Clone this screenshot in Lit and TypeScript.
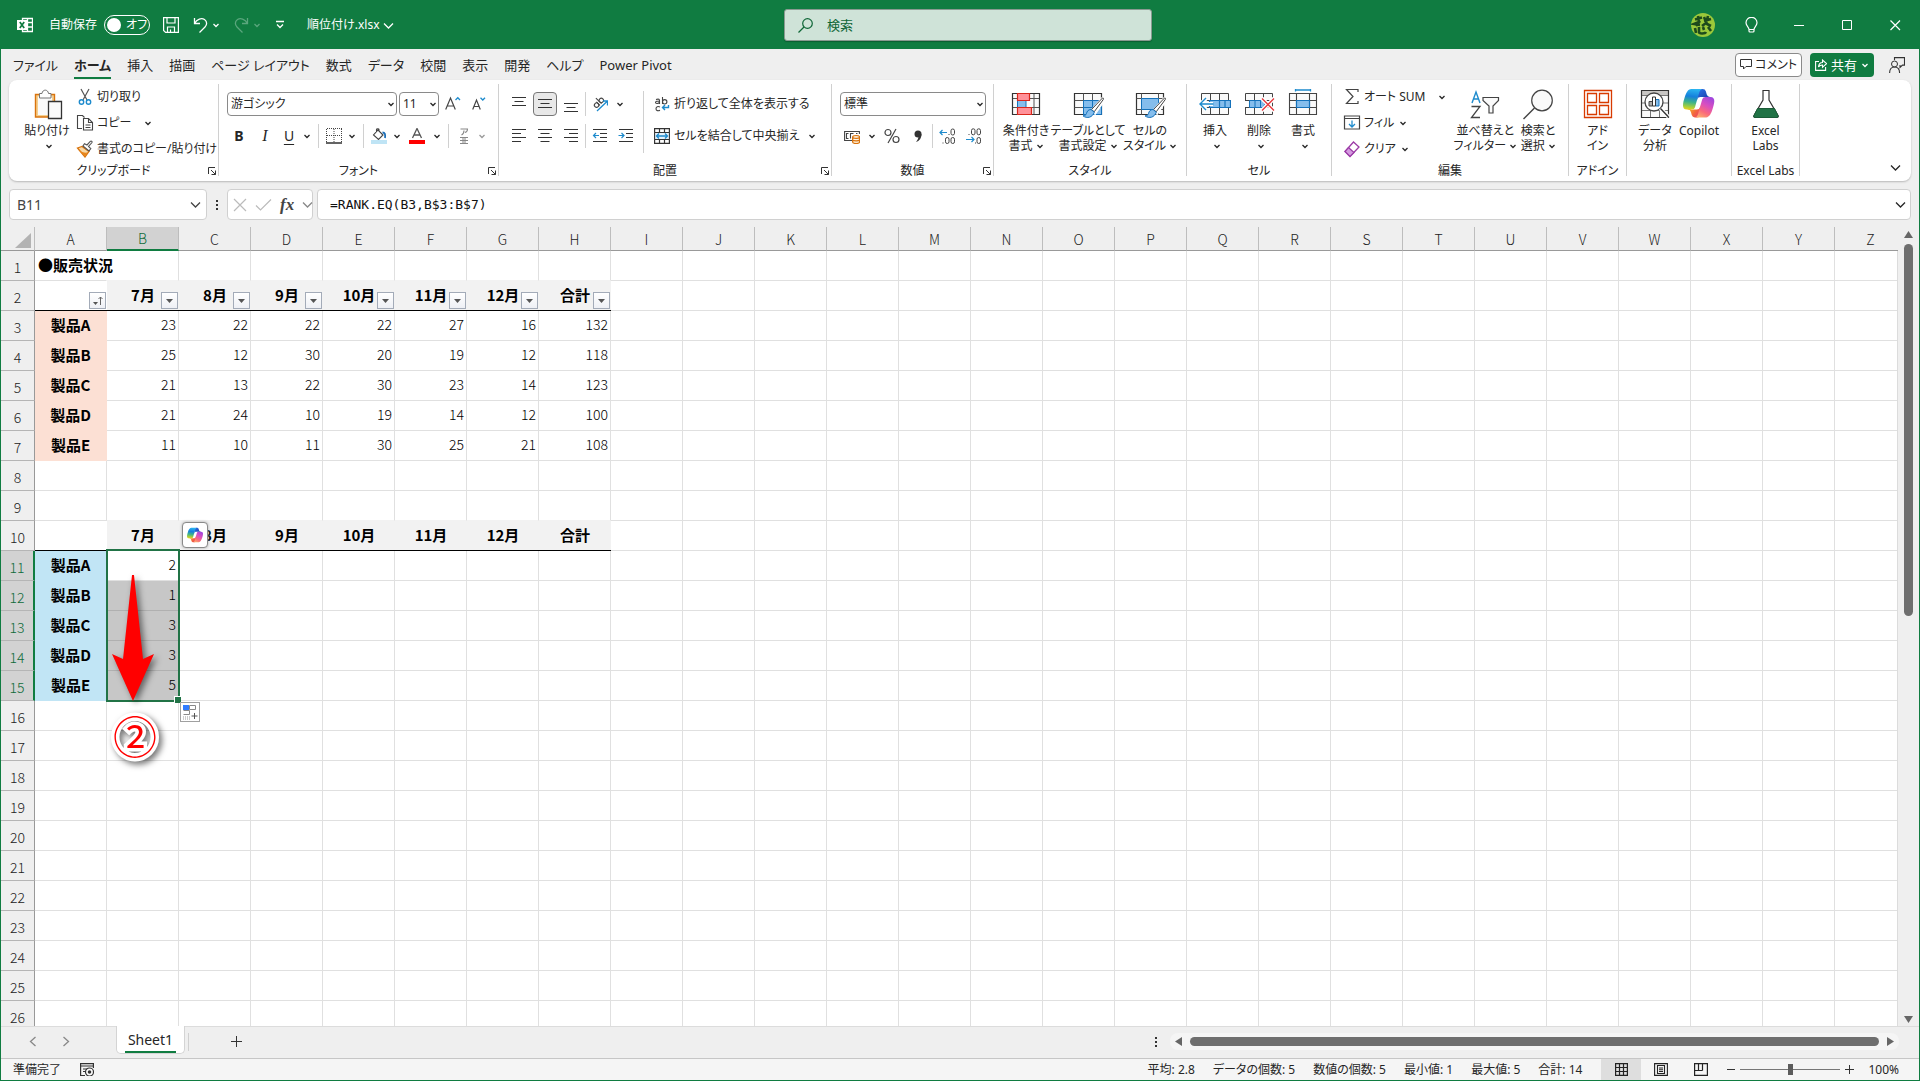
import { LitElement, html, svg, css, nothing } from "lit";
import { customElement } from "lit/decorators.js";
import { classMap } from "lit/directives/class-map.js";

type Frag = ReturnType<typeof svg>;

const copilotMark = (id: string) => svg`
  <defs>
    <linearGradient id="${id}a" x1="38" y1="17" x2="28" y2="4" gradientUnits="userSpaceOnUse"><stop offset="0" stop-color="#1a3fa8"/><stop offset="1" stop-color="#2a6be0"/></linearGradient>
    <linearGradient id="${id}b" x1="9" y1="33" x2="22" y2="43" gradientUnits="userSpaceOnUse"><stop offset="0" stop-color="#f7b228"/><stop offset=".6" stop-color="#f2683c"/><stop offset="1" stop-color="#ee4a5a"/></linearGradient>
    <linearGradient id="${id}c" x1="16" y1="4" x2="12" y2="34" gradientUnits="userSpaceOnUse"><stop offset="0" stop-color="#2bb5f0"/><stop offset=".35" stop-color="#1580dc"/><stop offset=".62" stop-color="#3db38a"/><stop offset=".85" stop-color="#a8cf3a"/><stop offset="1" stop-color="#f5d21c"/></linearGradient>
    <linearGradient id="${id}d" x1="40" y1="14" x2="24" y2="44" gradientUnits="userSpaceOnUse"><stop offset="0" stop-color="#9b45e0"/><stop offset=".4" stop-color="#d94fc0"/><stop offset=".7" stop-color="#fa6a7c"/><stop offset="1" stop-color="#fdb06a"/></linearGradient>
  </defs>
  <path fill="url(#${id}a)" d="M34.1 7.3A4.6 4.6 0 0 0 29.700 4h-1.300a4.600 4.600 0 0 0-4.600 3.800L21.500 20.400l.6-2a4.600 4.600 0 0 1 4.400-3.300h7.800l3.300 1.300 3.200-1.300h-.9a4.600 4.600 0 0 1-4.500-3.300z"/>
  <path fill="url(#${id}b)" d="M14.300 40.700A4.600 4.600 0 0 0 18.800 44h2.900a4.600 4.600 0 0 0 4.600-4.500l.3-12.200-.7 2.200a4.600 4.600 0 0 1-4.400 3.400h-7.900l-2.800-1.600-3.100 1.600h.9a4.600 4.600 0 0 1 4.500 3.300z"/>
  <path fill="url(#${id}c)" d="M29.500 4h-16c-4.600 0-7.400 6.100-9.200 12.100-2.200 7.200-5 16.800 3.200 16.800h6.900a4.600 4.600 0 0 0 4.500-3.400c1.400-5 4-13.800 5.900-20.500C26 6 27 4 29.500 4z"/>
  <path fill="url(#${id}d)" d="M18.500 44h16c4.600 0 7.400-6.100 9.200-12.100 2.200-7.200 5-16.800-3.200-16.800h-6.900a4.600 4.600 0 0 0-4.500 3.400c-1.400 5-4 13.800-5.900 20.500C22 42 21 44 18.500 44z"/>`;

const brush = svg`
  <path d="M30.500 9.500 20 21.500l3 2.500 8.500-12.500c.7-1.500-.2-2.600-1-2z" fill="#fff" stroke="#fff" stroke-width="3"/>
  <path d="M30.500 9 19.500 20.500l2.700 2.300L31.300 10.500c.6-1.200-.1-2-.8-1.500z" fill="#fff" stroke="#444"/>
  <path d="M19 20.500c-3 0-4 2-4.500 4-.4 1.600-1.800 2.300-3.500 2.300 4 3.200 9.500 1.700 11.300-3.600z" fill="#85bdec" stroke="#1572bb"/>`;

const icons: Record<string, Frag> = {
  chev: svg`<path d="M1.500 3 4 5.500 6.500 3" fill="none" stroke="currentColor" stroke-width="1.300"/>`,
  chevBig: svg`<path d="M1 3.500 5.500 8 10 3.500" fill="none" stroke="currentColor" stroke-width="1.300"/>`,
  excel: svg`<path d="M5.500 1.500h10v13h-10zM5.500 5.500h10M5.500 10h10M10.500 1.500v13" fill="none" stroke="#fff" stroke-width="1.300"/><rect y="3" width="10" height="10" fill="#fff"/><path d="m2.800 5 4.400 6M7.200 5l-4.400 6" stroke="#107c41" stroke-width="1.700"/>`,
  save: svg`<path d="M.6.600h14.800v14.800H2.600l-2-2zM4 .6v5.400h8V.6M4.500 15v-5h7v5M7.500 15v-2.500" fill="none" stroke="#fff" stroke-width="1.200"/>`,
  undo: svg`<path d="M1.500 1v5.500H7M1.500 6.500C4 2 8.500.5 11.500 2.500c3 2 2.500 5.500.5 7.500l-5.500 5.500" fill="none" stroke="currentColor" stroke-width="1.300"/>`,
  redo: svg`<path d="M13.500 1v5.500H8M13.500 6.500C11 2 6.500.5 3.500 2.500c-3 2-2.500 5.500-.5 7.500l5.500 5.500" fill="none" stroke="currentColor" stroke-width="1.300"/>`,
  customize: svg`<path d="M1 1.500h8M2 4.500 5 7.500l3-3" fill="none" stroke="#fff" stroke-width="1.300"/>`,
  search: svg`<circle cx="9.500" cy="5.500" r="4.800" fill="none" stroke="currentColor" stroke-width="1.200"/><path d="M6 9 .5 14.500" stroke="currentColor" stroke-width="1.200"/>`,
  avatar: svg`<circle cx="12" cy="12" r="12" fill="#9bc83a"/><path d="M4 6.500l7-2M7 3l1 6-5 2 6 1M9 8l-4 5M13 4l3 7 4 2M13 8l7-2M17 3l-2 7-4 3M4 15l1 5M8 14v5c0 2 6 2 7 0M12 14l1 3M17 14l3 4" fill="none" stroke="#1d4a1c" stroke-width="2.600"/>`,
  bulb: svg`<path d="M4 12.500h5M4 12.500C4 10 1 9 1 5.800a5.500 5.500 0 0 1 11 0C12 9 9 10 9 12.500v1.500a1 1 0 0 1-1 1H5a1 1 0 0 1-1-1z" fill="none" stroke="#fff" stroke-width="1.200"/>`,
  min: svg`<path d="M0 5.500h10" stroke="#fff"/>`,
  max: svg`<path d="M.5.500h9v9h-9z" fill="none" stroke="#fff"/>`,
  close: svg`<path d="m.5.500 9.500 9.500M10 .5.500 10" stroke="#fff" stroke-width="1.200"/>`,
  comment: svg`<path d="M.5.500h11v7H6L3.500 10V7.500h-3z" fill="none" stroke="#333" stroke-linejoin="round"/>`,
  share: svg`<path d="M4 2.500H.6v8.900h10V8M3.500 8c.3-3 2-4.500 4-4.500V1l4 3.600-4 3.700V6C6 6 4.500 6.500 3.500 8z" fill="none" stroke="#fff" stroke-width="1.100"/>`,
  person: svg`<circle cx="5.500" cy="7" r="3" fill="none" stroke="#333"/><path d="M.6 16c0-4 2-6 5-6s5 2 5 6M5.500 3V.6h10v7.500h-2L11 10.500V8" fill="none" stroke="#333" stroke-width="1.100"/>`,
  paste: svg`<path d="M4.500 5.500h19V28h-19z" fill="#f5cf8e" stroke="#d9730d" stroke-width="1.400"/><path d="M7 7.500h14V26H7z" fill="#fafafa"/><path d="M8.500 4.500H11C11.500 0 17 0 17.500 4.500H20v4.500H8.500z" fill="#fff" stroke="#777"/><path d="M17.500 12.500h13v17h-13z" fill="#fafafa" stroke="#333" stroke-width="1.300"/>`,
  cut: svg`<path d="M5 1l6 11M13 1 7 12" stroke="#555" stroke-width="1.200"/><circle cx="5.500" cy="14" r="2.200" fill="none" stroke="#1e8bcd" stroke-width="1.400"/><circle cx="12.500" cy="14" r="2.200" fill="none" stroke="#1e8bcd" stroke-width="1.400"/>`,
  copy: svg`<path d="M6 14.500H1.500v-13h5l2 2" fill="none" stroke="#444" stroke-width="1.100"/><path d="M7.500 4.500h5l4 4v7.500h-9zM12.500 4.500v4h4M9.500 11h5M9.500 13.500h5" fill="#fff" stroke="#444" stroke-width="1.100"/>`,
  painter: svg`<path d="M1.500 8 6 6.500l7 5-4 5.500z" fill="#f7d9a8" stroke="#d9730d" stroke-width="1.300"/><path d="M2.500 10c3 2 6 3 9 2.500L9 16.500z" fill="#e8861b"/><path d="m7 6 6 5 1.800-2.500L12.500 6.500 16 2.500c.5-1-1-1.800-1.700-1L11 5 8.500 3.800z" fill="#fff" stroke="#555" stroke-width="1.100"/>`,
  launcher: svg`<path d="M.5 7V.5H7M3 3l4.500 4.500M7.500 3.500v4h-4" fill="none" stroke="#333"/>`,
  growA: svg`<path d="M.7 13.500 5.500 2l4.800 11.500M2.200 10h6.600" fill="none" stroke="#444" stroke-width="1.200"/><path d="m10.500 4 2.300-2.300L15 4" fill="none" stroke="#1e8bcd" stroke-width="1.300"/>`,
  shrinkA: svg`<path d="M.7 13.500 4.500 4l3.800 9.500M2 10.500h5" fill="none" stroke="#444" stroke-width="1.200"/><path d="m8.500 1.700 2.300 2.300L13 1.700" fill="none" stroke="#1e8bcd" stroke-width="1.300"/>`,
  borders: svg`<path d="M.5 1v13M15.500 1v13M8 1v13M1 .5h15M1 7.500h15" fill="none" stroke="#444" stroke-dasharray="1 1"/><path d="M0 15h16" stroke="#222" stroke-width="1.400"/>`,
  fill: svg`<path d="m7 2 5 5-4.500 4.500-5-4.500zM5.500 4V1.500c0-1 2.500-1 2.500 0V3" fill="none" stroke="#444" stroke-width="1.100"/><path d="M11.500 4.500c2.500 0 3 2 2.500 5.500" fill="none" stroke="#1e6fb8" stroke-width="1.800"/><path d="M0 12h16v4H0z" fill="#bfe4f5"/>`,
  fontColor: svg`<path d="m3.500 10 4.500-9.500L12.500 10M5 7h6" fill="none" stroke="#555" stroke-width="1.300"/><path d="M0 12h16v4H0z" fill="#f00"/>`,
  phonetic: svg`<path d="M1.500 1h7C8.500 3 7.500 4 6 4.500M5 2.500C5 5 4.500 6 2.500 7" fill="none" stroke="#888" stroke-width="1.100"/><path d="M1 9.500h8M1 12.500h8M1 15.500h8M3 11h4M3 14h4" stroke="#888"/>`,
  vTop: svg`<path d="M1 1.500h14M3.500 5.500h9M1 9.500h14" stroke="#333"/>`,
  vMid: svg`<path d="M1 3.500h14M3.500 7.500h9M1 11.500h14" stroke="#333"/>`,
  vBot: svg`<path d="M1 7.500h14M3.500 11.500h9M1 15.500h14" stroke="#333"/>`,
  hLeft: svg`<path d="M1 1.500h14M1 5.500h9M1 9.500h14M1 13.500h9" stroke="#333"/>`,
  hMid: svg`<path d="M1 1.500h14M3.500 5.500h9M1 9.500h14M3.500 13.500h9" stroke="#333"/>`,
  hRight: svg`<path d="M1 1.500h14M6 5.500h9M1 9.500h14M6 13.500h9" stroke="#333"/>`,
  orient: svg`<g transform="rotate(-45 6 7)" fill="none" stroke="#444" stroke-width="1.100"><circle cx="3.500" cy="7.500" r="2.200"/><path d="M5.700 5v5M8 2v8"/><circle cx="10.200" cy="7.500" r="2.200"/></g><path d="m5 15 10-9.500M11 5h4.500v4.500" fill="none" stroke="#1e8bcd" stroke-width="1.300"/>`,
  outdent: svg`<path d="M1 1.500h14M8 5.500h7M8 9.500h7M1 13.500h14" stroke="#333"/><path d="M1.500 7.500H7M4 5 1.500 7.500 4 10" fill="none" stroke="#1e8bcd" stroke-width="1.200"/>`,
  indent: svg`<path d="M1 1.500h14M8 5.500h7M8 9.500h7M1 13.500h14" stroke="#333"/><path d="M.5 7.500H6M3.500 5 6 7.500 3.500 10" fill="none" stroke="#1e8bcd" stroke-width="1.200"/>`,
  wrap: svg`<g fill="none" stroke="#444" stroke-width="1.100"><path d="M2 3.500c3-1 3.500 0 3.500 1.500v3M5.500 5C3 5 1.500 5.500 1.500 6.500S4 8 5.500 6.500M8.500 1v7"/><circle cx="10.700" cy="5.800" r="2.200"/><path d="M6 11c-2-1-4-.3-4 1.700s2 2.600 4 1.600"/></g><path d="M14.500 9v2.500h-6M11 9l-2.500 2.500L11 14" fill="none" stroke="#1e8bcd" stroke-width="1.400"/>`,
  merge: svg`<path d="M.6.600h14.800v14.800H.6zM5.500.6v3.900M10.500.6v3.900M5.500 11.500v3.900M10.500 11.500v3.900" fill="none" stroke="#333" stroke-width="1.200"/><path d="M.6 4.500h14.800v7H.6z" fill="#e4f1fb" stroke="#333"/><path d="M2.500 8h11M5 5.500 2.500 8 5 10.500M11 5.500 13.500 8 11 10.500" fill="none" stroke="#1e8bcd" stroke-width="1.300"/>`,
  currency: svg`<path d="M8 12.500H.6v-9h14.800V6M4.500 5.500h-2v5h2M9.500 5.500h-3v5M12 5.500h1.500" fill="none" stroke="#444" stroke-width="1.100"/><path d="M8.600 9c0-2 7-2 7 0v5c0 2-7 2-7 0zM8.600 9c0 1.800 7 1.800 7 0M8.600 11.500c0 1.800 7 1.800 7 0" fill="#fdebd0" stroke="#d9730d" stroke-width="1.200"/>`,
  percent: svg`<circle cx="4" cy="4.500" r="3" fill="none" stroke="#444" stroke-width="1.200"/><circle cx="12" cy="11.500" r="3" fill="none" stroke="#444" stroke-width="1.200"/><path d="M12 1 4 15" stroke="#444" stroke-width="1.200"/>`,
  comma: svg`<circle cx="5" cy="4" r="3.500" fill="#333"/><path d="M8.500 4c0 4-2 7-5.500 8C5 9.500 5.500 8 5.500 6z" fill="#333"/>`,
  decInc: svg`<path d="M1 4.500h7M3.500 2 1 4.500 3.500 7" fill="none" stroke="#1e8bcd" stroke-width="1.200"/><g fill="none" stroke="#444"><rect x="12" y="1" width="3.500" height="6" rx="1.700"/><rect x="6.500" y="9.500" width="3.500" height="6" rx="1.700"/><rect x="12" y="9.500" width="3.500" height="6" rx="1.700"/></g><path d="M9.500 6h1v1h-1zM3.500 14.500h1v1h-1z" fill="#444"/>`,
  decDec: svg`<path d="M1 11.500h8M6.500 9 9 11.500 6.500 14" fill="none" stroke="#1e8bcd" stroke-width="1.200"/><g fill="none" stroke="#444"><rect x="6.500" y=".8" width="3.500" height="6" rx="1.700"/><rect x="12" y=".8" width="3.500" height="6" rx="1.700"/><rect x="12" y="9.500" width="3.500" height="6" rx="1.700"/></g><path d="M3.500 6h1v1h-1zM10 14.500h1v1h-1z" fill="#444"/>`,
  condFmt: svg`<path d="M2.500 4.500h27v21h-27z" fill="#fafafa"/><path d="M24 4.500v21M2.500 9.500h27M2.500 18.500h27M7.500 4.500v21" stroke="#555" fill="none"/><path d="M2.500 4.500h27v21h-27z" fill="none" stroke="#333" stroke-width="1.200"/><path d="M7.500 11.500h8.500v7H7.500z" fill="#85bdec" stroke="#1572bb"/><path d="M7.500 4.500h12v7h-12zM7.500 18.500h14v7h-14z" fill="#ff9199" stroke="#d9261c" stroke-width="1.200"/>`,
  tblFmt: svg`<path d="M2.500 4.500h27v21h-27z" fill="#fafafa" stroke="#333" stroke-width="1.200"/><path d="M11.500 11.500h18v14h-18z" fill="#85bdec"/><path d="M2.500 11.500h27M2.500 18.500h27M11.500 4.500v21M20.500 4.500v21" stroke="#555" fill="none"/><path d="M11.500 11.500h18v14h-18M20.500 11.500v14M11.500 18.500h18M11.500 11.500v14" fill="none" stroke="#1572bb"/>${brush}`,
  cellStyle: svg`<path d="M2.500 4.500h27v21h-27z" fill="#fafafa" stroke="#333" stroke-width="1.200"/><path d="M2.500 9.500h27M2.500 20.500h27M7.500 4.500v21M24.500 4.500v21" stroke="#555"/><path d="M7.500 9.500h17v11h-17z" fill="#85bdec" stroke="#1572bb"/>${brush}`,
  insCell: svg`<path d="M2.500 4.500h27v21h-27zM2.500 18.500h27M11.500 4.500v7M20.500 4.500v7M11.500 18.500v7M20.500 18.500v7M2.500 11.500h27" fill="#fafafa" stroke="#444"/><path d="M10.500 11.500h21v7h-21zM20.500 11.500v7M26 11.500v7" fill="#85bdec" stroke="#1572bb" stroke-width="1.200"/><path d="M2 15h12M7 9.500 1.500 15 7 20.500" fill="none" stroke="#fff" stroke-width="4"/><path d="M1.500 15h13M7 9 1 15l6 6" fill="none" stroke="#1e8bcd" stroke-width="1.400"/>`,
  delCell: svg`<path d="M2.500 4.500h27v21h-27zM2.500 18.500h27M11.500 4.500v21M20.500 4.500v21M2.500 11.500h27" fill="#fafafa" stroke="#444"/><path d="M1 12h4v6H1z" fill="#fff"/><path d="M6.500 11.500H20l2 3.500-2 3.500H6.500zM12 11.500v7M17.500 11.500v7" fill="#85bdec" stroke="#1572bb"/><path d="m19 9.500 12 12M31 9.500l-12 12" stroke="#fff" stroke-width="4"/><path d="m19 9.500 12 12M31 9.500l-12 12" stroke="#e8383d" stroke-width="1.300"/>`,
  fmtCell: svg`<path d="M2.500 4.500h27v21h-27zM2.500 11.500h27M2.500 18.500h27M9.500 4.500v21M22.500 4.500v21" fill="#fafafa" stroke="#444" stroke-width="1.100"/><path d="M9.500 11.500h13v7h-13z" fill="#85bdec" stroke="#1572bb" stroke-width="1.200"/><path d="M8.500 1h15M8.500 0v2.500M23.500 0v2.500" stroke="#1e8bcd" stroke-width="1.300"/>`,
  sigma: svg`<path d="M15 4V1.500H3.500L10 8.500l-6.500 7H15V13" fill="none" stroke="#444" stroke-width="1.200"/>`,
  fillDown: svg`<path d="M1.500 2h15v13h-15zM1.500 4.500h15" fill="none" stroke="#444" stroke-width="1.200"/><path d="M9 6.500V13M6 10l3 3 3-3" fill="none" stroke="#1e8bcd" stroke-width="1.300"/>`,
  eraser: svg`<path d="M10.500 2 16 7 7 16.500 2 11.500z" fill="#fff" stroke="#9b3aa6" stroke-width="1.300"/><path d="m5.500 7.500 5.500 5L7 16.500l-5-5z" fill="#d59be0" stroke="#9b3aa6" stroke-width="1.200"/>`,
  sort: svg`<path d="M3 14 7 3l4 11M4.500 10h5" fill="none" stroke="#1e8bcd" stroke-width="1.400"/><path d="M2.500 17.500H11l-8.500 11H11" fill="none" stroke="#444" stroke-width="1.300"/><path d="M14 8.500h15.500v3L24 17v7h-4v-7l-6-5.500z" fill="#fafafa" stroke="#444" stroke-width="1.200"/>`,
  find: svg`<circle cx="20" cy="11.500" r="10.300" fill="#fafafa" stroke="#444" stroke-width="1.200"/><path d="M12.500 19 1.500 30" stroke="#444" stroke-width="1.400"/>`,
  addins: svg`<path d="M2.500 1.500h27v27h-27zM5.500 4.500h9v9h-9zM17.500 4.500h9v9h-9zM5.500 16.500h9v9h-9zM17.500 16.500h9v9h-9z" fill="none" stroke="#d83b01" stroke-width="1.300"/>`,
  analyze: svg`<path d="M2.500 1.500h27v27h-27z" fill="#fafafa"/><path d="M3 2h26v4H3z" fill="#c8c6c4"/><path d="M2.500 6.500h27M2.500 14h27M2.500 21.500h27M11.500 21v7.500M20.500 21v7.500" stroke="#777"/><path d="M2.500 1.500h27v27h-27z" fill="none" stroke="#333" stroke-width="1.200"/><circle cx="15" cy="13" r="9" fill="#fff" stroke="#444" stroke-width="1.300"/><path d="m21.500 19.500 8 8.500" stroke="#fff" stroke-width="4"/><path d="m21.500 19.500 8 8.500" stroke="#333" stroke-width="1.400"/><path d="M10 12.500h3.500V17H10z" fill="#aaa" stroke="#444"/><path d="M16.500 10.500H20V17h-3.500z" fill="#85bdec" stroke="#1572bb"/><path d="M13.500 8h3v9h-3z" fill="#fff" stroke="#333"/>`,
  labs: svg`<path d="M13 1.500h6v9.500l9 15.500c.6 1.400 0 2-1.200 2H5.200c-1.200 0-1.800-.6-1.200-2L13 11z" fill="#fff" stroke="#333" stroke-width="1.200"/><path d="M7.500 19.500h17l3.500 7c.6 1.400 0 2-1.200 2H5.200c-1.200 0-1.800-.6-1.200-2z" fill="#217346" stroke="#1b5c38"/>`,
  copilot: copilotMark("cp"),
  copilotSmall: copilotMark("cs"),
  cancel: svg`<path d="m1 1 12 12M13 1 1 13" stroke="#bbb" stroke-width="1.200"/>`,
  enter: svg`<path d="m1 7.500 4.500 4.500L16 1.500" fill="none" stroke="#bbb" stroke-width="1.200"/>`,
  dots: svg`<path d="M0 0h2v2H0zM0 4h2v2H0zM0 8h2v2H0z" fill="#333"/>`,
  left: svg`<path d="M6.500 1 1.500 5.500l5 4.500" fill="none" stroke="#888" stroke-width="1.300"/>`,
  right: svg`<path d="m1.500 1 5 4.500-5 4.500" fill="none" stroke="#888" stroke-width="1.300"/>`,
  plus: svg`<path d="M5.500 0v11M0 5.500h11" stroke="#333"/>`,
  minus: svg`<path d="M0 .5h8" stroke="#333"/>`,
  plusSmall: svg`<path d="M4.500 0v9M0 4.500h9" stroke="#333"/>`,
  triUp: svg`<path d="M4.500 0 9 7H0z" fill="#666"/>`,
  triDown: svg`<path d="M4.500 7 0 0h9z" fill="#666"/>`,
  triLeft: svg`<path d="M0 4.500 7 0v9z" fill="#666"/>`,
  triRight: svg`<path d="M7 4.500 0 0v9z" fill="#666"/>`,
  macro: svg`<path d="M5 12.500H.6V.6h12.800V5M.6 3h12.800M3 6h4M3 8.500h2" fill="none" stroke="#333" stroke-width="1.200"/><circle cx="9.500" cy="9" r="4" fill="#fff" stroke="#333" stroke-width="1.200"/><circle cx="9.500" cy="9" r="1.800" fill="#333"/>`,
  viewGrid: svg`<path d="M.6.600h11.800v11.800H.6zM4.500.6v11.800M8.500.6v11.800M.6 4.500h11.800M.6 8.500h11.800" fill="none" stroke="#222" stroke-width="1.200"/>`,
  viewPage: svg`<path d="M.6.600h12.800v11.800H.6zM3.500 2.500h7v8h-7zM5 5h4M5 6.800h4M5 8.500h4" fill="none" stroke="#222" stroke-width="1.100"/>`,
  viewBreak: svg`<path d="M.6.600h12.800v11.800H.6zM4.500.6v6.900M8.500.6v6.900M.6 7.500h7.900" fill="none" stroke="#222" stroke-width="1.200"/>`,
  corner: svg`<path d="M16 0v15H0z" fill="#b3b3b3"/>`,
  filter: svg`<path d="M1 1h7L4.500 5z" fill="#555"/>`,
  sorted: svg`<path d="M0 6h5L2.500 9z" fill="#555"/><path d="M7.500 9V1M5.500 3l2-2 2 2" fill="none" stroke="#666"/>`,
  autofill: svg`<path d="M1 1h6v5H1z" fill="#2f7bff"/><path d="M7.500 1.500h6v4h-6zM1.500 6.500h6v4h-6" fill="none" stroke="#888"/><path d="M1 13h7M1 15h7" stroke="#999" stroke-dasharray="1 1"/><path d="M12.500 9v6M9.500 12h6" stroke="#555"/>`,
};

const ic = (name: string, w: number, h = w, box = `0 0 ${w} ${h}`) =>
  html`<svg class="ic" width=${w} height=${h} viewBox=${box} fill="none" aria-hidden="true">${icons[name]}</svg>`;
const chev = () => html`<span class="chev">${ic("chev", 8)}</span>`;
const tool = (name: string, label: string, size = 16, h = size, cls = "") =>
  html`<button class="tool ${cls}" aria-label=${label}>${ic(name, size, h)}</button>`;
const drop = (label: string, disabled = false) =>
  html`<button class="drop" aria-label=${label} ?disabled=${disabled}>${ic("chev", 8)}</button>`;
const sep = () => html`<span class="minisep"></span>`;
const rowBtn = (name: string, label: string, arrow = false) =>
  html`<button class="rowbtn">${ic(name, 18)}<span>${label}</span>${arrow ? chev() : nothing}</button>`;
const big = (name: string, l1: string, l2: string | null, arrow: boolean, cls: string, box = "0 0 32 32") =>
  html`<button class="big ${cls}">
    ${ic(name, 32, 32, box)}
    <span class="line">${l1}</span>
    ${l2 !== null || arrow ? html`<span class="line">${l2}${arrow ? chev() : nothing}</span>` : nothing}
  </button>`;
const groupLabel = (label: string, launcher = false) => html`<div class="glabel"><span>${label}</span>${
  launcher ? html`<button class="launch" aria-label=${`${label}の設定`}>${ic("launcher", 8)}</button>` : nothing
}</div>`;

const TABS = ["ファイル", "ホーム", "挿入", "描画", "ページ レイアウト", "数式", "データ", "校閲", "表示", "開発", "ヘルプ", "Power Pivot"];
const COLS = "ABCDEFGHIJKLMNOPQRSTUVWXYZ".split("");
const MONTHS = ["7月", "8月", "9月", "10月", "11月", "12月", "合計"];
const SALES: [string, number[]][] = [
  ["製品A", [23, 22, 22, 22, 27, 16, 132]],
  ["製品B", [25, 12, 30, 20, 19, 12, 118]],
  ["製品C", [21, 13, 22, 30, 23, 14, 123]],
  ["製品D", [21, 24, 10, 19, 14, 12, 100]],
  ["製品E", [11, 10, 11, 30, 25, 21, 108]],
];
const RANKS = [2, 1, 3, 3, 5];
const STATS = ["平均: 2.8", "データの個数: 5", "数値の個数: 5", "最小値: 1", "最大値: 5", "合計: 14"];

@customElement("app-root")
export class AppRoot extends LitElement {
  static styles = css`
    :host {
      --green: #107c41;
      display: flex;
      flex-direction: column;
      box-sizing: border-box;
      height: 100vh;
      border: 1px solid var(--green);
      background: #efefef;
      color: #262626;
      font: 12px/16px "Noto Sans", "Noto Sans CJK JP", sans-serif;
      font-feature-settings: "palt";
      overflow: hidden;
    }
    * { box-sizing: border-box; }
    button, input, select {
      font: inherit;
      font-feature-settings: inherit;
      color: inherit;
      margin: 0;
      padding: 0;
      border: 0;
      background: none;
      outline: none;
    }
    .ic { display: block; flex: none; }

    .title {
      flex: 0 0 48px;
      display: grid;
      grid-template-columns: 1fr 368px 1fr;
      align-items: center;
      padding-left: 16px;
      background: var(--green);
      color: #fff;
    }
    .quick, .window, .autosave, .switch, .file { display: flex; align-items: center; }
    .autosave { margin: 0 13px 0 16px; gap: 7px; }
    .switch { position: relative; width: 46px; height: 20px; }
    .switch input {
      position: absolute;
      inset: 0;
      width: 46px;
      height: 20px;
      appearance: none;
      border: 1px solid #fff;
      border-radius: 10px;
    }
    .switch input::before {
      content: "";
      display: block;
      width: 14px;
      height: 14px;
      margin: 2px;
      border-radius: 50%;
      background: #fff;
    }
    .switch span { padding-left: 22px; }
    .quick button { display: flex; align-items: center; justify-content: center; height: 24px; }
    .quick .save { margin-right: 14px; }
    .quick .arrow { width: 8px; margin: 0 14px 0 4px; }
    .quick .faded { color: #5aa67d; }
    .quick .more { width: 10px; margin-right: 22px; }
    .quick .file { gap: 4px; }
    .find {
      display: flex;
      align-items: center;
      gap: 14px;
      height: 32px;
      padding: 0 13px;
      border: 1px solid #8a9a91;
      border-radius: 3px;
      background: #cfe3d8;
      color: #0e6636;
      box-shadow: 0 1px 1px #0b5f31;
    }
    .find input { flex: 1; font-size: 13px; }
    .find input::placeholder { color: #0e6636; opacity: 1; }
    .window { justify-content: flex-end; }
    .window button { display: grid; place-items: center; width: 48px; height: 48px; }

    .tabs { flex: 0 0 31px; display: flex; align-items: center; padding: 0 14px 0 4px; font-size: 13px; }
    .tabs nav { display: flex; flex: 1; }
    .tabs a {
      margin: 0 8px;
      padding: 6px 0 3px;
      line-height: 18px;
      color: inherit;
      text-decoration: none;
      border-bottom: 2px solid transparent;
      white-space: nowrap;
    }
    .tabs a.on { font-weight: bold; border-color: var(--green); }
    .pill {
      display: flex;
      align-items: center;
      justify-content: center;
      gap: 4px;
      height: 24px;
      padding: 0 4px;
      margin-right: 8px;
      border-radius: 4px;
      font-size: 13px;
    }
    .pill.note { min-width: 65px; gap: 3px; background: #fff; border: 1px solid #8a8a8a; font-size: 12px; }
    .pill.share { min-width: 64px; margin-right: 15px; background: var(--green); color: #fff; }

    .ribbon {
      flex: 0 0 101px;
      display: flex;
      margin: 0 8px;
      border-radius: 8px;
      background: #fff;
      box-shadow: 0 1px 2px #b8b8b8;
    }
    .group { flex: none; display: flex; flex-direction: column; }
    .group + .group { border-left: 1px solid transparent; border-image: linear-gradient(#fff 5px, #d0d0d0 5px, #d0d0d0 95px, #fff 95px) 1; }
    .body { flex: 1; display: flex; align-items: flex-start; padding: 0 8px; }
    .glabel { position: relative; height: 18px; padding-bottom: 2px; text-align: center; }
    .launch { position: absolute; right: 2px; top: 4px; }
    .w-clip { width: 209px; } .w-font { width: 280px; } .w-align { width: 333px; } .w-num { width: 162px; }
    .w-style { width: 193px; } .w-cell { width: 145px; } .w-edit { width: 237px; } .w-add { width: 58px; }
    .w-ai { width: 105px; } .w-labs { width: 68px; } .w-end { width: 1px; }
    .w-clip .body { padding: 0 0 0 12px; }
    .body.tight { padding: 0 0 0 6px; }
    .body.center { justify-content: center; padding: 0; }
    .fold { margin: auto 10px 8px auto; }

    .stack { display: flex; flex-direction: column; padding: 4px 0 0 3px; }
    .w-edit .stack { width: 115px; }
    .rowbtn { display: flex; align-items: center; gap: 3px; height: 26px; white-space: nowrap; }
    .rowbtn .chev { margin-left: 2px; }
    .far .chev { margin-left: 10px; }
    .chev { display: inline-flex; margin-left: 3px; vertical-align: middle; }
    .big {
      display: flex;
      flex-direction: column;
      align-items: center;
      padding-top: 9px;
      line-height: 15px;
      white-space: nowrap;
    }
    .big .ic + .line { margin-top: 2px; }
    .big .line { display: flex; align-items: center; justify-content: center; height: 15px; }
    .b44 { width: 44px; } .b52 { width: 52px; } .b62 { width: 62px; } .b70 { width: 72px; }

    .rows { display: flex; flex-direction: column; gap: 8px; padding-top: 12px; }
    .bar { display: flex; align-items: center; gap: 2px; height: 24px; }
    .bar.wide .minisep { margin: 0 3px; }
    .tool { display: grid; place-items: center; width: 24px; height: 24px; border-radius: 4px; }
    .tool.slim { width: 20px; }
    .tool.on { background: #e8e8e8; border: 1px solid #777; }
    .glyph { font-size: 14px; line-height: 24px; }
    .glyph.i { font-family: "Liberation Serif", serif; font-style: italic; font-size: 16px; }
    .glyph.u { text-decoration: underline; text-underline-offset: 3px; }
    .drop { display: grid; place-items: center; width: 12px; height: 24px; }
    .drop:disabled { color: #999; }
    .minisep { width: 1px; height: 24px; background: #d0d0d0; }
    .tallsep { width: 1px; height: 62px; margin: 11px 8px 0 5px; background: #d0d0d0; }
    .textbtn { display: flex; align-items: center; gap: 2px; height: 24px; white-space: nowrap; }
    .textbtn .pad { display: grid; place-items: center; width: 20px; }
    .spread { display: flex; justify-content: space-between; width: 166px; }
    .pick { position: relative; display: flex; height: 24px; }
    .pick select {
      width: 100%;
      height: 24px;
      padding: 0 16px 0 3px;
      appearance: none;
      border: 1px solid #8a8a8a;
      border-radius: 4px;
      background: #fff;
    }
    .pick .ic { position: absolute; right: 2px; top: 8px; pointer-events: none; }
    .p-font { width: 170px; } .p-size { width: 40px; } .p-num { width: 146px; }

    .formula { flex: 0 0 31px; display: flex; margin: 8px 8px 7px; }
    .box { display: flex; align-items: center; border: 1px solid #d0d0d0; border-radius: 4px; background: #fff; }
    .name { width: 198px; padding: 0 5px 0 7px; font-size: 14px; color: #444; }
    .name input { flex: 1; min-width: 0; }
    .grip { display: grid; place-items: center; width: 20px; }
    .fx { width: 86px; padding: 0 1px 0 5px; gap: 8px; }
    .fx i { font: italic bold 17px/20px "Liberation Serif", serif; color: #444; }
    .fx .lite { margin-left: auto; color: #888; }
    .expr { flex: 1; margin-left: 4px; padding: 0 4px 0 12px; }
    .expr input { flex: 1; font: 13px/20px "DejaVu Sans Mono", monospace; color: #111; }

    .sheet { flex: 1; min-height: 0; display: flex; }
    .grid { flex: 1; min-width: 0; position: relative; overflow: hidden; }
    .grid::after { content: ""; position: absolute; top: 24px; right: 0; bottom: 0; width: 1px; background: #dcdcdc; }
    table {
      table-layout: fixed;
      width: 1906px;
      border-collapse: separate;
      border-spacing: 0;
      font: 14px/20px "Noto Sans CJK JP", sans-serif;
      font-feature-settings: normal;
      color: #000;
    }
    .c-head { width: 34px; }
    th, td { padding: 0; font-weight: 300; white-space: nowrap; }
    thead th { height: 24px; line-height: 20px; border-right: 1px solid #bdbdbd; border-bottom: 1px solid #999; color: #222; }
    thead th.sel { background: #d2d2d2; color: #0f6b3a; border-bottom: 2px solid #107c41; }
    thead .ic { margin: 3px 0 0 14px; }
    tbody th { height: 30px; padding-top: 2px; background: #efefef; border-right: 1px solid #999; border-bottom: 1px solid #b5b5b5; color: #222; }
    tbody th.sel { background: #d2d2d2; color: #0f6b3a; border-right: 2px solid #107c41; }
    td { height: 30px; background: #fff; border-right: 1px solid #e0e0e0; border-bottom: 1px solid #e0e0e0; }
    td.num { padding: 0 2px 3px 0; text-align: right; }
    td.bold { padding-bottom: 1px; font-size: 15px; font-weight: bold; text-align: center; }
    td.cap { position: relative; background: #f2f2f2; border-right: 0; border-bottom-color: #000; }
    td.edge { position: relative; border-right: 0; border-bottom-color: #000; }
    td.above { border-bottom-color: #f2f2f2; }
    td.peach { background: #fce0d4; border-color: #fce0d4; }
    td.sky { background: #c1e5f5; border-color: #c1e5f5; }
    td.lead { padding: 0 0 1px 3px; text-align: left; border-right-color: #fff; }
    td.shade { background: #c7c7c7; border-bottom-color: #b0b0b0; }
    .filter {
      position: absolute;
      right: 1px;
      bottom: 1px;
      display: grid;
      place-items: center;
      width: 17px;
      height: 17px;
      border: 1px solid #a3abb8;
      background: linear-gradient(#fff, #eef0f5);
    }
    .selbox { position: absolute; left: 105px; top: 322px; width: 74px; height: 153px; border: 2px solid #217346; pointer-events: none; }
    .selbox::after {
      content: "";
      position: absolute;
      right: -3px;
      bottom: -3px;
      width: 6px;
      height: 6px;
      background: #217346;
      border-top: 1px solid #fff;
      border-left: 1px solid #fff;
    }
    .float { position: absolute; display: grid; place-items: center; background: #fff; }
    .float.ai { left: 181px; top: 295px; width: 26px; height: 26px; border: 1px solid #8a8a8a; border-radius: 4px; box-shadow: 0 0 3px #aaa; }
    .float.auto { left: 179px; top: 475px; width: 20px; height: 20px; border: 1px solid #a0a0a0; }
    .arrowmark { position: absolute; left: 105px; top: 342px; filter: drop-shadow(3px 3px 3px rgba(0, 0, 0, 0.5)); }
    .stepmark {
      position: absolute;
      left: 112px;
      top: 486px;
      font: 44px/44px "Noto Sans CJK JP", sans-serif;
      color: #f00;
      -webkit-text-stroke: 7px #fff;
      paint-order: stroke fill;
      filter: drop-shadow(3px 3px 3px rgba(0, 0, 0, 0.55));
    }

    .vscroll {
      flex: 0 0 21px;
      display: flex;
      flex-direction: column;
      align-items: center;
      padding: 4px 0 3px;
    }
    .vscroll .thumb { width: 9px; flex: 0 0 47%; margin: 6px 0 auto; border-radius: 5px; background: #6e6e6e; }

    .sheetbar {
      flex: 0 0 32px;
      display: flex;
      align-items: center;
      padding: 0 20px 2px 28px;
      border-top: 1px solid #dcdcdc;
    }
    .sheetbar .nav { width: 8px; margin-right: 25px; }
    .sheettab {
      align-self: flex-start;
      width: 69px;
      height: 28px;
      margin: -1px 3px 0 21px;
      padding: 1px 8px 0;
      background: #fff;
      border: 1px solid #d4d4d4;
      border-top: 0;
      border-radius: 0 0 5px 5px;
      font-size: 14px;
    }
    .sheettab span { display: block; line-height: 23px; border-bottom: 2px solid var(--green); }
    .sheetbar .minisep { height: 18px; margin-right: 42px; }
    .sheetbar .grip { margin-left: auto; margin-right: 4px; }
    .hscroll {
      flex: 0 0 39%;
      display: flex;
      align-items: center;
      gap: 8px;
      height: 17px;
      padding: 0 5px;
      border-radius: 8px;
      background: #f5f5f5;
    }
    .hscroll .thumb { flex: 1; height: 9px; border-radius: 5px; background: #6e6e6e; }

    .status {
      flex: 0 0 22px;
      display: flex;
      align-items: center;
      padding: 0 20px 0 12px;
      border-top: 1px solid #c6c6c6;
      background: #f5f5f5;
    }
    .status .macro { margin-left: 19px; }
    .stats { display: flex; gap: 18px; margin: 0 19px 0 auto; }
    .view { display: grid; place-items: center; width: 40px; height: 21px; }
    .view.on { background: #dedede; }
    .zoom { display: flex; align-items: center; gap: 5px; margin: 0 14px 0 6px; }
    .zoom input { width: 100px; height: 16px; appearance: none; background: linear-gradient(#777, #777) center / 100% 1px no-repeat; }
    .zoom input::-webkit-slider-thumb { appearance: none; width: 5px; height: 11px; background: #5c5c5c; }
  `;

  private renderTitle() {
    return html`<header class="title">
      <div class="quick">
        ${ic("excel", 16)}
        <label class="autosave">自動保存
          <span class="switch"><input type="checkbox" /><span>オフ</span></span>
        </label>
        <button class="save" aria-label="保存">${ic("save", 16)}</button>
        <button aria-label="元に戻す">${ic("undo", 15, 16)}</button>
        <button class="arrow" aria-label="元に戻す一覧">${ic("chev", 8)}</button>
        <button class="faded" aria-label="やり直し">${ic("redo", 15, 16)}</button>
        <button class="arrow faded" aria-label="やり直し一覧">${ic("chev", 8)}</button>
        <button class="more" aria-label="クイック アクセス">${ic("customize", 10)}</button>
        <button class="file">順位付け.xlsx ${ic("chevBig", 11)}</button>
      </div>
      <div class="find">${ic("search", 15)}<input type="search" placeholder="検索" aria-label="検索" /></div>
      <div class="window">
        <button aria-label="アカウント">${ic("avatar", 24)}</button>
        <button aria-label="ヒント">${ic("bulb", 13, 16)}</button>
        <button aria-label="最小化">${ic("min", 10)}</button>
        <button aria-label="最大化">${ic("max", 10)}</button>
        <button aria-label="閉じる">${ic("close", 11)}</button>
      </div>
    </header>`;
  }

  private renderTabs() {
    return html`<div class="tabs">
      <nav>${TABS.map((t) => html`<a href="#" class=${classMap({ on: t === "ホーム" })}>${t}</a>`)}</nav>
      <button class="pill note">${ic("comment", 12)}コメント</button>
      <button class="pill share">${ic("share", 12)}共有${ic("chev", 8)}</button>
      <button aria-label="プレゼンス">${ic("person", 16)}</button>
    </div>`;
  }

  private renderRibbon() {
    return html`<div class="ribbon">
      <section class="group w-clip">
        <div class="body">
          ${big("paste", "貼り付け", null, true, "b52")}
          <div class="stack">
            ${rowBtn("cut", "切り取り")}
            <span class="far">${rowBtn("copy", "コピー", true)}</span>
            ${rowBtn("painter", "書式のコピー/貼り付け")}
          </div>
        </div>
        ${groupLabel("クリップボード", true)}
      </section>
      <section class="group w-font">
        <div class="body"><div class="rows">
          <div class="bar">
            <label class="pick p-font"><select aria-label="フォント"><option>游ゴシック</option></select>${ic("chev", 8)}</label>
            <label class="pick p-size"><select aria-label="フォント サイズ"><option>11</option></select>${ic("chev", 8)}</label>
            ${tool("growA", "拡大", 16)}${tool("shrinkA", "縮小", 14, 16)}
          </div>
          <div class="bar wide">
            <button class="tool glyph"><b>B</b></button>
            <button class="tool glyph i">I</button>
            <button class="tool slim glyph u">U</button>${drop("下線")}
            ${sep()}${tool("borders", "罫線", 16, 16, "slim")}${drop("罫線一覧")}
            ${sep()}${tool("fill", "塗りつぶし", 16, 16, "slim")}${drop("塗りつぶし一覧")}
            ${tool("fontColor", "文字色")}${drop("文字色一覧")}
            ${sep()}${tool("phonetic", "ふりがな", 10, 16, "slim")}${drop("ふりがな一覧", true)}
          </div>
        </div></div>
        ${groupLabel("フォント", true)}
      </section>
      <section class="group w-align">
        <div class="body">
          <div class="rows">
            <div class="bar">
              ${tool("vTop", "上揃え")}${tool("vMid", "上下中央", 16, 16, "on")}${tool("vBot", "下揃え")}
              ${sep()}${tool("orient", "方向")}${drop("方向一覧")}
            </div>
            <div class="bar">
              ${tool("hLeft", "左揃え")}${tool("hMid", "中央揃え")}${tool("hRight", "右揃え")}
              ${sep()}${tool("outdent", "インデント解除")}${tool("indent", "インデント")}
            </div>
          </div>
          <span class="tallsep"></span>
          <div class="rows">
            <button class="textbtn"><span class="pad">${ic("wrap", 16)}</span>折り返して全体を表示する</button>
            <div class="spread">
              <button class="textbtn"><span class="pad">${ic("merge", 16)}</span>セルを結合して中央揃え</button>
              ${drop("結合一覧")}
            </div>
          </div>
        </div>
        ${groupLabel("配置", true)}
      </section>
      <section class="group w-num">
        <div class="body"><div class="rows">
          <label class="pick p-num"><select aria-label="表示形式"><option>標準</option></select>${ic("chev", 8)}</label>
          <div class="bar">
            ${tool("currency", "通貨")}${drop("通貨一覧")}${tool("percent", "パーセント")}${tool("comma", "桁区切り", 10, 13)}
            ${sep()}${tool("decInc", "小数点以下を増やす")}${tool("decDec", "小数点以下を減らす")}
          </div>
        </div></div>
        ${groupLabel("数値", true)}
      </section>
      <section class="group w-style">
        <div class="body tight">
          ${big("condFmt", "条件付き", "書式", true, "b52")}
          ${big("tblFmt", "テーブルとして", "書式設定", true, "b70")}
          ${big("cellStyle", "セルの", "スタイル", true, "b52")}
        </div>
        ${groupLabel("スタイル")}
      </section>
      <section class="group w-cell">
        <div class="body tight">
          ${big("insCell", "挿入", null, true, "b44")}
          ${big("delCell", "削除", null, true, "b44")}
          ${big("fmtCell", "書式", null, true, "b44")}
        </div>
        ${groupLabel("セル")}
      </section>
      <section class="group w-edit">
        <div class="body">
          <div class="stack">
            <span class="far">${rowBtn("sigma", "オート SUM", true)}</span>
            ${rowBtn("fillDown", "フィル", true)}
            ${rowBtn("eraser", "クリア", true)}
          </div>
          ${big("sort", "並べ替えと", "フィルター", true, "b62")}
          ${big("find", "検索と", "選択", true, "b44")}
        </div>
        ${groupLabel("編集")}
      </section>
      <section class="group w-add">
        <div class="body center">${big("addins", "アド", "イン", false, "b44")}</div>
        ${groupLabel("アドイン")}
      </section>
      <section class="group w-ai">
        <div class="body tight">
          ${big("analyze", "データ", "分析", false, "b44")}
          ${big("copilot", "Copilot", null, false, "b44", "2 4 45 45")}
        </div>
      </section>
      <section class="group w-labs">
        <div class="body center">${big("labs", "Excel", "Labs", false, "b44")}</div>
        ${groupLabel("Excel Labs")}
      </section>
      <section class="group w-end"></section>
      <button class="fold" aria-label="リボンを折りたたむ">${ic("chevBig", 11)}</button>
    </div>`;
  }

  private renderFormula() {
    return html`<div class="formula">
      <div class="box name"><input aria-label="名前ボックス" value="B11" /><button aria-label="名前一覧">${ic("chevBig", 11)}</button></div>
      <span class="grip">${ic("dots", 2, 10)}</span>
      <div class="box fx">
        <button aria-label="キャンセル">${ic("cancel", 14)}</button>
        <button aria-label="入力">${ic("enter", 17, 14)}</button>
        <button aria-label="関数の挿入"><i>fx</i></button>
        <span class="lite">${ic("chevBig", 11)}</span>
      </div>
      <div class="box expr"><input aria-label="数式" value="=RANK.EQ(B3,B$3:B$7)" /><button aria-label="数式バーの展開">${ic("chevBig", 11)}</button></div>
    </div>`;
  }

  private renderCell(row: number, col: number) {
    if (row === 1) {
      if (col === 0) return html`<td class="bold lead">●販売状況</td>`;
      return html`<td class=${classMap({ above: col < 8 })}></td>`;
    }
    if (col > 7) return html`<td></td>`;
    if (row === 2 || row === 10) {
      const filtered = row === 2;
      const button = filtered
        ? html`<button class="filter" aria-label="フィルター">${col === 0 ? ic("sorted", 10) : ic("filter", 9, 6)}</button>`
        : nothing;
      return col === 0
        ? html`<td class="edge">${button}</td>`
        : html`<td class="bold cap">${MONTHS[col - 1]}${button}</td>`;
    }
    if (row >= 3 && row <= 7) {
      const [name, values] = SALES[row - 3];
      return col === 0 ? html`<td class="bold peach">${name}</td>` : html`<td class="num">${values[col - 1]}</td>`;
    }
    if (row >= 11 && row <= 15) {
      if (col === 0) return html`<td class="bold sky">${SALES[row - 11][0]}</td>`;
      if (col === 1) return html`<td class="num ${row > 11 ? "shade" : ""}">${RANKS[row - 11]}</td>`;
    }
    return html`<td class=${classMap({ above: row === 9 && col > 0 })}></td>`;
  }

  private renderSheet() {
    const rows = Array.from({ length: 26 }, (_, i) => i + 1);
    return html`<main class="sheet">
      <div class="grid">
        <table>
          <colgroup><col class="c-head" />${COLS.map(() => html`<col />`)}</colgroup>
          <thead><tr>
            <th>${ic("corner", 16, 15)}</th>
            ${COLS.map((c) => html`<th scope="col" class=${classMap({ sel: c === "B" })}>${c}</th>`)}
          </tr></thead>
          <tbody>${rows.map((r) => html`<tr>
            <th scope="row" class=${classMap({ sel: r >= 11 && r <= 15 })}>${r}</th>
            ${COLS.map((_, c) => this.renderCell(r, c))}
          </tr>`)}</tbody>
        </table>
        <div class="selbox"></div>
        <button class="float ai" aria-label="Copilot">${ic("copilotSmall", 16, 16, "2 2 44 44")}</button>
        <button class="float auto" aria-label="オートフィル オプション">${ic("autofill", 16)}</button>
        <svg class="arrowmark" width="54" height="134" viewBox="0 0 54 134"><path d="M26 6h2l9 84 11-5-21 47L6 85l11 5z" fill="#f00" /></svg>
        <span class="stepmark">②</span>
      </div>
      <div class="vscroll">
        <button aria-label="上へ">${ic("triUp", 9, 7)}</button>
        <div class="thumb"></div>
        <button aria-label="下へ">${ic("triDown", 9, 7)}</button>
      </div>
    </main>`;
  }

  private renderFooter() {
    return html`<div class="sheetbar">
        <button class="nav" aria-label="前のシート">${ic("left", 8, 11)}</button>
        <button class="nav" aria-label="次のシート">${ic("right", 8, 11)}</button>
        <button class="sheettab"><span>Sheet1</span></button>
        ${sep()}
        <button aria-label="新しいシート">${ic("plus", 11)}</button>
        <span class="grip">${ic("dots", 2, 10)}</span>
        <div class="hscroll">
          <button aria-label="左へ">${ic("triLeft", 7, 9)}</button>
          <div class="thumb"></div>
          <button aria-label="右へ">${ic("triRight", 7, 9)}</button>
        </div>
      </div>
      <footer class="status">
        <span>準備完了</span>
        <button class="macro" aria-label="マクロの記録">${ic("macro", 14, 13)}</button>
        <div class="stats">${STATS.map((s) => html`<span>${s}</span>`)}</div>
        <button class="view on" aria-label="標準">${ic("viewGrid", 13)}</button>
        <button class="view" aria-label="ページ レイアウト">${ic("viewPage", 14, 13)}</button>
        <button class="view" aria-label="改ページ プレビュー">${ic("viewBreak", 14, 13)}</button>
        <div class="zoom">
          <button aria-label="縮小">${ic("minus", 8, 1)}</button>
          <input type="range" min="0" max="100" value="50" aria-label="ズーム" />
          <button aria-label="拡大">${ic("plusSmall", 9)}</button>
        </div>
        <span>100%</span>
      </footer>`;
  }

  render() {
    return html`${this.renderTitle()}${this.renderTabs()}${this.renderRibbon()}${this.renderFormula()}${this.renderSheet()}${this.renderFooter()}`;
  }
}
